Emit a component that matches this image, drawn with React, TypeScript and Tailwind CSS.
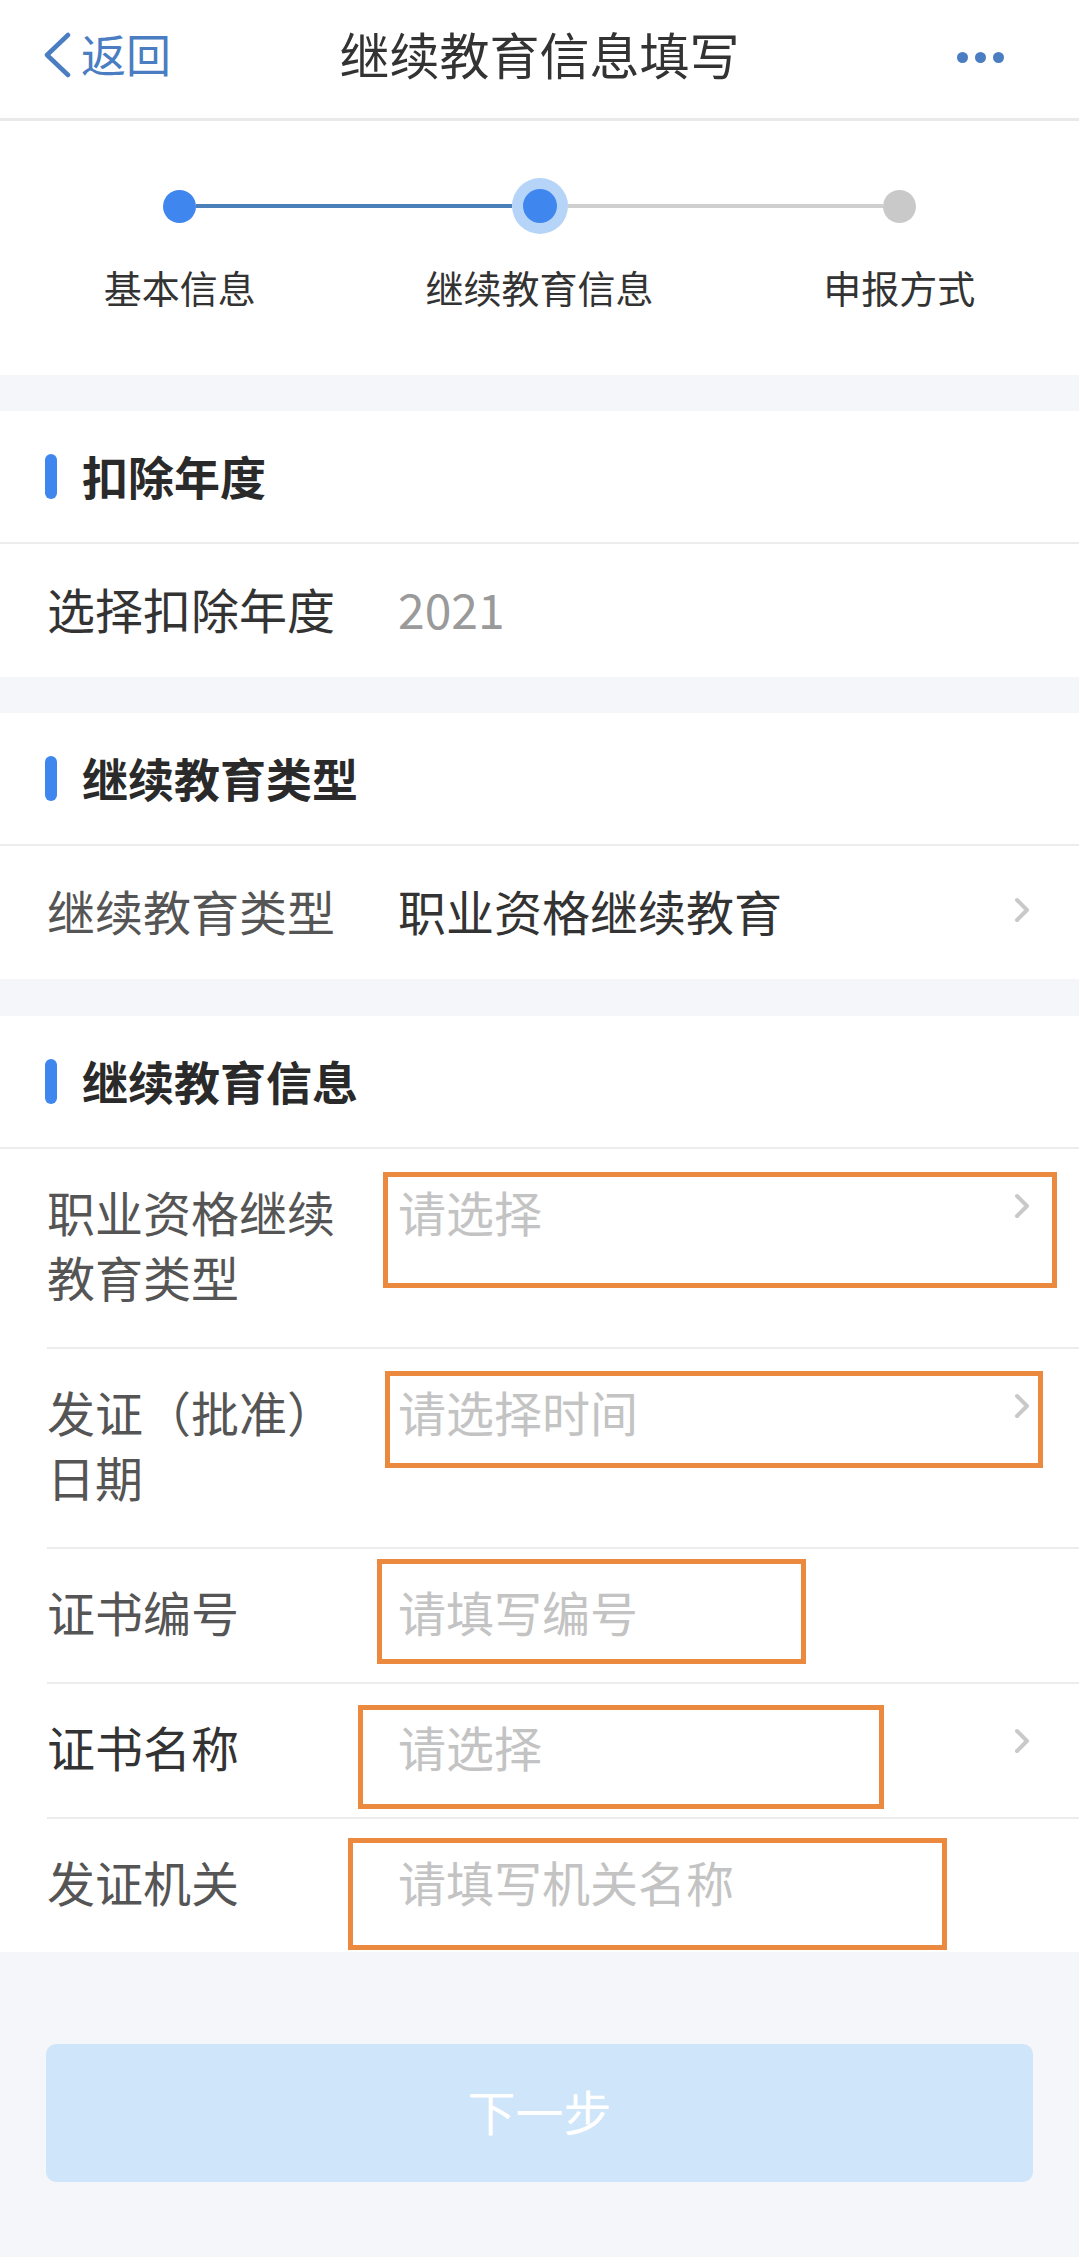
import React from 'react'

type Field = {
  label: string
  placeholder: string
  arrow?: boolean
  dark?: boolean
  box: { top: string; left: string; w: string; h: string }
}

const fields: Field[] = [
  {
    label: '职业资格继续教育类型',
    placeholder: '请选择',
    arrow: true,
    box: { top: 'top-[23px]', left: 'left-[383px]', w: 'w-[674px]', h: 'h-[116px]' },
  },
  {
    label: '发证（批准）日期',
    placeholder: '请选择时间',
    arrow: true,
    box: { top: 'top-[22px]', left: 'left-[385px]', w: 'w-[658px]', h: 'h-[97px]' },
  },
  {
    label: '证书编号',
    placeholder: '请填写编号',
    box: { top: 'top-[10px]', left: 'left-[377px]', w: 'w-[429px]', h: 'h-[105px]' },
  },
  {
    label: '证书名称',
    placeholder: '请选择',
    arrow: true,
    dark: true,
    box: { top: 'top-[21px]', left: 'left-[358px]', w: 'w-[526px]', h: 'h-[104px]' },
  },
  {
    label: '发证机关',
    placeholder: '请填写机关名称',
    box: { top: 'top-[19px]', left: 'left-[348px]', w: 'w-[599px]', h: 'h-[112px]' },
  },
]

function Chevron() {
  return (
    <svg width="16" height="26" viewBox="0 0 16 26" fill="none">
      <polyline points="3,3 13,13 3,23" stroke="#c9c9c9" strokeWidth="4" strokeLinecap="round" strokeLinejoin="round" />
    </svg>
  )
}

function SectionHeader({ title }: { title: string }) {
  return (
    <div className="flex items-center h-[133px] pl-[45px] border-b-2 border-[#ececec]">
      <span className="w-[12px] h-[45px] rounded-full bg-[#3f86ee]" />
      <span className="ml-[25px] text-[46px] font-bold text-[#2a2a2a] leading-none pb-[4px]">{title}</span>
    </div>
  )
}

export default function App() {
  return (
    <div className="min-h-[2257px] bg-[#f5f6f9] font-['Noto_Sans_CJK_SC','Noto_Sans',sans-serif]">
      {/* Nav bar */}
      <div className="grid grid-cols-[1fr_auto_1fr] items-center h-[121px] pb-[12px] bg-white border-b-[3px] border-[#e9e9e9]">
        <div className="flex items-center pl-[43px] text-[#4a7dc2]">
          <svg width="28" height="46" viewBox="0 0 28 46" fill="none" className="mt-[4px]">
            <polyline points="25,3 4,23 25,43" stroke="#4a7dc2" strokeWidth="4.5" strokeLinecap="round" strokeLinejoin="round" />
          </svg>
          <span className="ml-[10px] text-[45px] leading-none">返回</span>
        </div>
        <div className="text-[50px] text-[#333] leading-none">继续教育信息填写</div>
        <div className="flex justify-end gap-[7px] pr-[75px] pt-[8px]">
          <span className="w-[11px] h-[11px] rounded-full bg-[#4a7dc2]" />
          <span className="w-[11px] h-[11px] rounded-full bg-[#4a7dc2]" />
          <span className="w-[11px] h-[11px] rounded-full bg-[#4a7dc2]" />
        </div>
      </div>

      {/* Steps */}
      <div className="bg-white pt-[57px] pb-[63px]">
        <div className="grid grid-cols-3">
          <div className="flex flex-col items-center">
            <div className="flex items-center w-full h-[56px]">
              <div className="flex-1" />
              <span className="w-[33px] h-[33px] rounded-full bg-[#3f86ee]" />
              <div className="flex-1 h-[4px] bg-[#4b7fba]" />
            </div>
            <span className="mt-[28px] text-[38px] text-[#333] leading-[50px]">基本信息</span>
          </div>
          <div className="flex flex-col items-center">
            <div className="flex items-center w-full h-[56px]">
              <div className="flex-1 h-[4px] bg-[#4b7fba]" />
              <span className="flex items-center justify-center w-[56px] h-[56px] rounded-full bg-[#b5d4f7]">
                <span className="w-[34px] h-[34px] rounded-full bg-[#3f86ee]" />
              </span>
              <div className="flex-1 h-[4px] bg-[#cfcfcf]" />
            </div>
            <span className="mt-[28px] text-[38px] text-[#333] leading-[50px]">继续教育信息</span>
          </div>
          <div className="flex flex-col items-center">
            <div className="flex items-center w-full h-[56px]">
              <div className="flex-1 h-[4px] bg-[#cfcfcf]" />
              <span className="w-[33px] h-[33px] rounded-full bg-[#c9c9c9]" />
              <div className="flex-1" />
            </div>
            <span className="mt-[28px] text-[38px] text-[#333] leading-[50px]">申报方式</span>
          </div>
        </div>
      </div>

      {/* Deduction year */}
      <div className="mt-[36px] bg-white">
        <SectionHeader title="扣除年度" />
        <div className="flex items-center h-[133px] pl-[47px] pb-[6px] text-[48px] leading-none">
          <span className="w-[351px] text-[#333]">选择扣除年度</span>
          <span className="text-[#9a9a9a]">2021</span>
        </div>
      </div>

      {/* Education type */}
      <div className="mt-[36px] bg-white">
        <SectionHeader title="继续教育类型" />
        <div className="flex items-center h-[133px] pl-[47px] pr-[49px] pb-[6px] text-[48px] leading-none">
          <span className="w-[351px] text-[#555]">继续教育类型</span>
          <span className="flex-1 text-[#333]">职业资格继续教育</span>
          <Chevron />
        </div>
      </div>

      {/* Education info */}
      <div className="mt-[37px] bg-white">
        <SectionHeader title="继续教育信息" />
        {fields.map((f, i) => (
          <div key={f.label} className="relative pl-[47px]">
            <div
              className={`flex pt-[30px] pb-[38px] pr-[49px] text-[48px] leading-[65px] ${
                i < fields.length - 1 ? 'border-b-2 border-[#ececec]' : ''
              }`}
            >
              <span className={`w-[351px] shrink-0 pr-[30px] ${f.dark ? 'text-[#333]' : 'text-[#555]'}`}>{f.label}</span>
              <span className="flex-1 text-[#c3c3c3]">{f.placeholder}</span>
              {f.arrow && (
                <span className="flex items-center h-[65px] -mt-[6px]">
                  <Chevron />
                </span>
              )}
            </div>
            <div className={`absolute border-[5px] border-[#eb8a3e] ${f.box.top} ${f.box.left} ${f.box.w} ${f.box.h}`} />
          </div>
        ))}
      </div>

      {/* Next button */}
      <div className="px-[46px] pt-[92px] pb-[74px]">
        <button className="w-full h-[138px] rounded-[10px] bg-[#cfe5fa] text-white text-[48px] pb-[6px]">下一步</button>
      </div>
    </div>
  )
}
